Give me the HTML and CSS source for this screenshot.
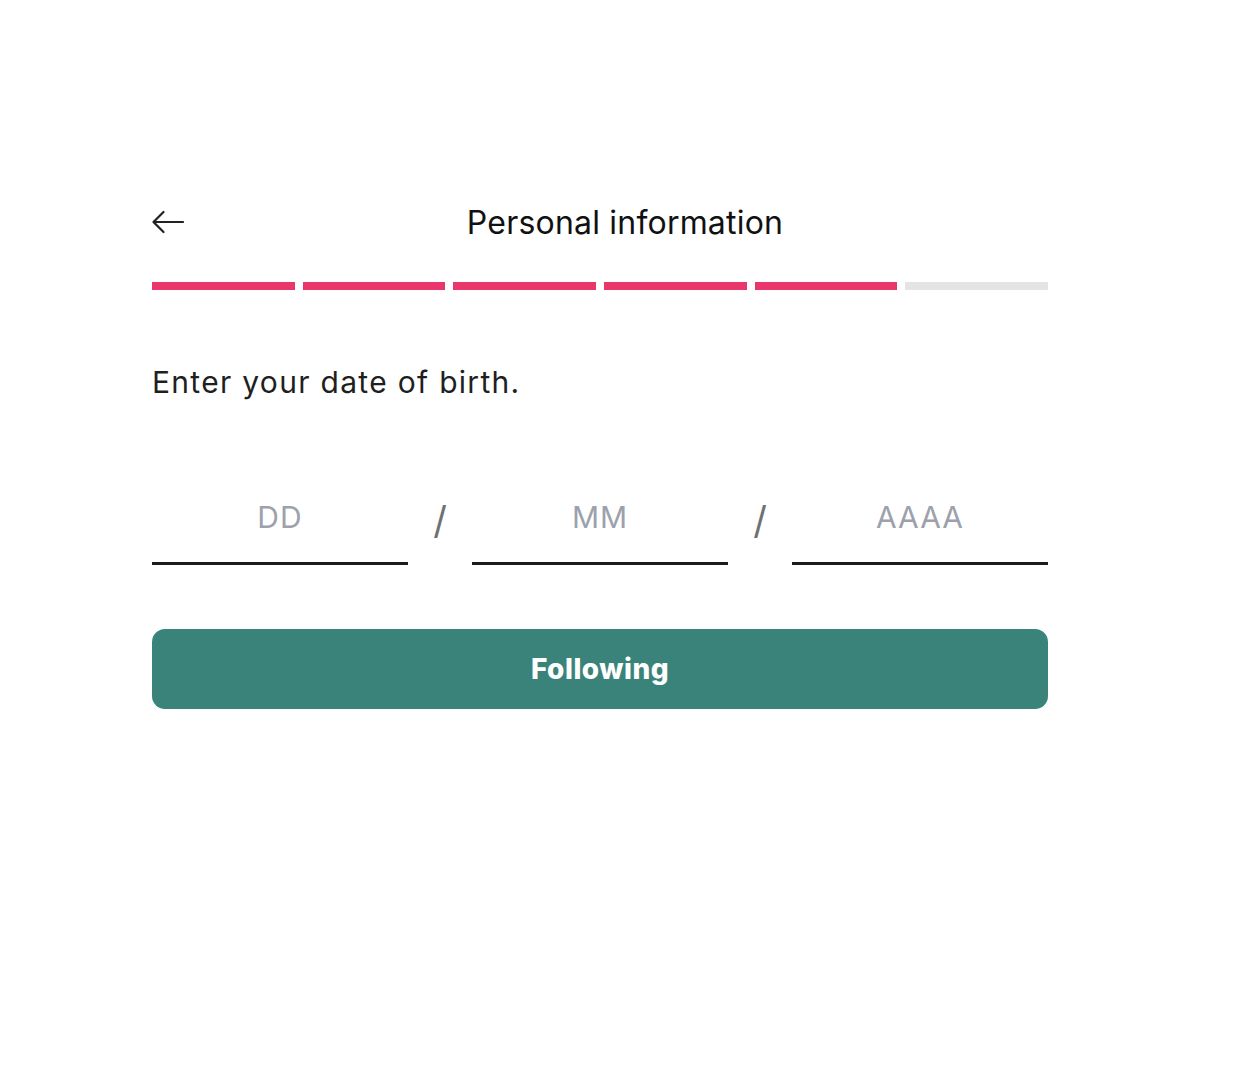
FILE: index.html
```html
<!DOCTYPE html>
<html lang="en">
<head>
<meta charset="utf-8">
<title>Personal information</title>
<link rel="stylesheet" href="styles.css">
</head>
<body>
<main class="page">
  <header class="header">
    <button class="back" aria-label="Back">
      <svg width="32" height="24" viewBox="0 0 32 24" fill="none" stroke="#222" stroke-width="2.2" stroke-linecap="round" stroke-linejoin="round">
        <path d="M31 12H2.5"/>
        <path d="M11.5 2L1.5 12l10 10"/>
      </svg>
    </button>
    <h1 class="title">Personal information</h1>
  </header>
  <div class="progress">
    <span class="seg done"></span>
    <span class="seg done"></span>
    <span class="seg done"></span>
    <span class="seg done"></span>
    <span class="seg done"></span>
    <span class="seg"></span>
  </div>
  <p class="question">Enter your date of birth.</p>
  <div class="date">
    <input class="field" type="text" placeholder="DD">
    <span class="sep">/</span>
    <input class="field" type="text" placeholder="MM">
    <span class="sep">/</span>
    <input class="field" type="text" placeholder="AAAA">
  </div>
  <button class="next">Following</button>
</main>
</body>
</html>
```

FILE: styles.css
```css
* { box-sizing: border-box; }
html, body { margin: 0; padding: 0; background: #fff; }
body { font-family: Inter, "Noto Sans", sans-serif; color: #1c1c1c; }
.page {
  width: 896px;
  margin: 0 0 0 152px;
  padding-top: 200px;
}
.header {
  display: flex;
  align-items: center;
  height: 44px;
}
.back {
  width: 32px;
  height: 24px;
  padding: 0;
  border: 0;
  background: none;
  display: flex;
  align-items: center;
}
.back svg { display: block; }
.title {
  flex: 1;
  margin: 0;
  padding-left: 18px;
  text-align: center;
  font-size: 32px;
  font-weight: 400;
  color: #111;
  letter-spacing: 0.2px;
}
.progress {
  display: flex;
  gap: 8px;
  margin-top: 38px;
}
.seg {
  flex: 1;
  height: 8px;
  background: #e4e4e4;
}
.seg.done { background: #ea376b; }
.question {
  margin: 72px 0 0;
  font-size: 30px;
  line-height: 40px;
  letter-spacing: 1.3px;
  color: #1f1f1f;
  font-weight: 400;
}
.date {
  display: flex;
  align-items: center;
  margin-top: 92px;
}
.field {
  width: 256px;
  height: 71px;
  border: 0;
  border-bottom: 3px solid #1c1c1c;
  font-family: Inter, "Noto Sans", sans-serif;
  font-size: 30px;
  letter-spacing: 1px;
  text-align: center;
  padding: 0 0 22px;
  outline: none;
  background: transparent;
}
.field::placeholder { color: #9ca1ab; }
.sep {
  width: 64px;
  text-align: center;
  font-size: 38px;
  color: #707070;
  align-self: flex-start;
  margin-top: 1px;
  line-height: 50px;
}
.next {
  display: block;
  width: 100%;
  height: 80px;
  margin-top: 64px;
  border: 0;
  border-radius: 13px;
  background: #3a837b;
  color: #fff;
  font-family: Inter, "Noto Sans", sans-serif;
  font-size: 28px;
  font-weight: 800;
  letter-spacing: 0.5px;
}
```
